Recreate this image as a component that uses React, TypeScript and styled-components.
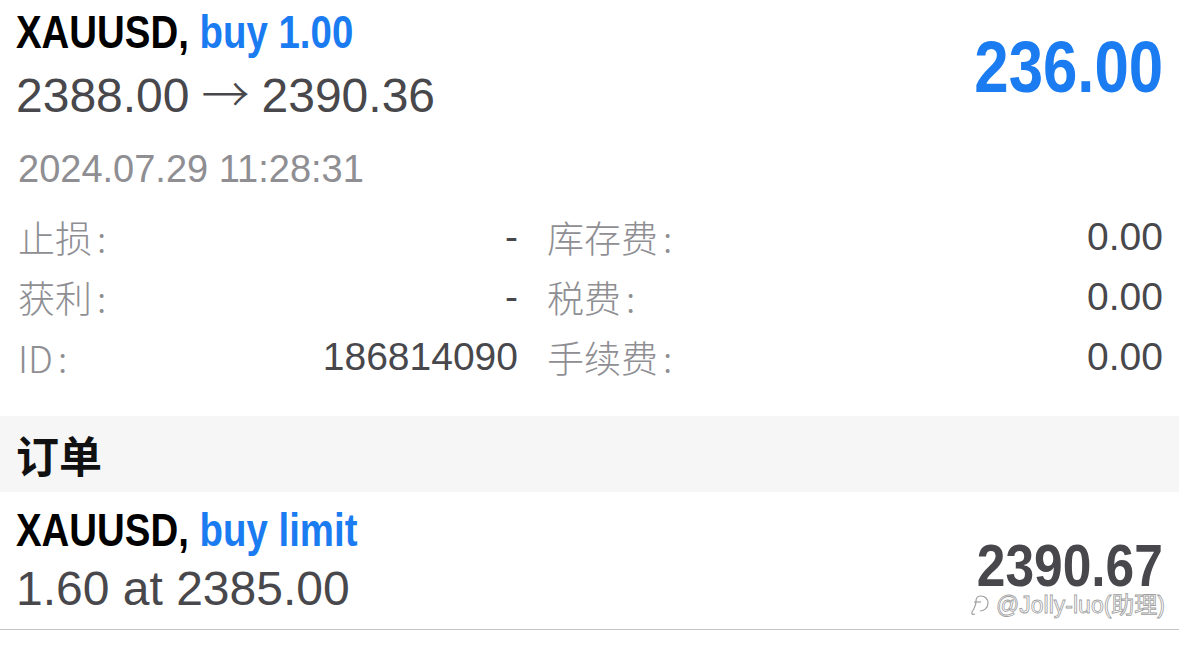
import styled, { createGlobalStyle } from "styled-components";
import { Fragment } from "react";

const Global = createGlobalStyle`
    html, body {
        margin: 0;
        padding: 0;
        background: #ffffff;
    }
    body {
        font-family: "Liberation Sans", Arial, "Noto Sans CJK SC", sans-serif;
        -webkit-font-smoothing: antialiased;
    }
`

const Page = styled.div`
    width: 1179px;
    height: 647px;
    overflow: hidden;
    background: #fff;
`

const Position = styled.div`
    display: grid;
    grid-template-columns: 1fr auto;
    padding: 5px 16px 0 16px;
    position: relative;
`

const TitleBlock = styled.div`
    display: flex;
    flex-direction: column;
`

// condensed bold look: no narrow font installed, so squeeze Liberation Sans
const Title = styled.div`
    font-weight: bold;
    font-size: 46px;
    line-height: 54px;
    color: #000;
    white-space: nowrap;
    transform: scaleX(0.835);
    transform-origin: left center;
`

const Side = styled.span`
    color: #1b7cf1;
`

const Prices = styled.div`
    font-size: 48px;
    line-height: 64px;
    color: #48484c;
    white-space: nowrap;
`

const Arrow = styled.span`
    font-family: "Noto Sans CJK SC", sans-serif;
    font-weight: 300;
    margin: 0 12px;
`

const Profit = styled.div<{ $color: string; $size: number; $top: number }>`
    font-weight: bold;
    font-size: ${p => p.$size}px;
    line-height: ${p => Math.round(p.$size * 0.77)}px;
    color: ${p => p.$color};
    margin-top: ${p => p.$top}px;
    white-space: nowrap;
    transform: scaleX(0.858);
    transform-origin: right center;
`

const Date = styled.div`
    font-size: 38px;
    line-height: 40px;
    color: #8e8e93;
    padding: 21px 18px 18px;
`

const Details = styled.div`
    display: grid;
    grid-template-columns: 500px 1fr;
    column-gap: 29px;
    padding: 0 16px 0 18px;
`

const Cell = styled.div`
    display: flex;
    justify-content: space-between;
    align-items: center;
    height: 60px;
    font-size: 39px;
`

const Label = styled.span`
    color: #8e8e93;
    font-family: "Noto Sans CJK SC", "Liberation Sans", sans-serif;
    font-weight: 300;
    font-size: 37px;
`

const Colon = styled.span`
    margin-left: 5px;
`

const Value = styled.span`
    color: #48484c;
`

const SectionHeader = styled.div`
    margin-top: 29px;
    background: #f6f6f6;
    height: 76px;
    display: flex;
    align-items: center;
    padding: 0 16px;
    font-family: "Noto Sans CJK SC", sans-serif;
    font-weight: bold;
    font-size: 43px;
    color: #111;
`

const Order = styled(Position)`
    padding-top: 11px;
    padding-bottom: 8px;
    border-bottom: 1px solid #c6c6c8;
`

const Watermark = styled.div`
    position: absolute;
    right: 14px;
    top: 100px;
    display: flex;
    align-items: center;
    gap: 6px;
    font-size: 23px;
    line-height: 26px;
    color: #fff;
    -webkit-text-stroke: 0.8px #a0a0a0;
    white-space: nowrap;
`

const details: [string, string, string, string][] = [
    ["止损", "-", "库存费", "0.00"],
    ["获利", "-", "税费", "0.00"],
    ["ID", "186814090", "手续费", "0.00"],
]

const MarkIcon = () => (
    <svg width="22" height="24" viewBox="0 0 22 24" fill="none" stroke="#a0a0a0" strokeWidth="1.2">
        <path d="M7 21 C5 22 3 21 4 19 C6 16 8 12 8 8 C8 5 10 3 13 3 C17 3 20 6 20 10 C20 15 16 18 12 18" />
        <path d="M6 9 L13 9" />
    </svg>
)

export default function App() {
    return (
        <Page>
            <Global />
            <Position>
                <TitleBlock>
                    <Title>XAUUSD, <Side>buy 1.00</Side></Title>
                    <Prices>2388.00<Arrow>→</Arrow>2390.36</Prices>
                </TitleBlock>
                <Profit $color="#1b7cf1" $size={72} $top={35}>236.00</Profit>
            </Position>
            <Date>2024.07.29 11:28:31</Date>
            <Details>
                {details.map(([l1, v1, l2, v2]) => (
                    <Fragment key={l1}>
                        <Cell>
                            <Label>{l1}<Colon>:</Colon></Label>
                            <Value>{v1}</Value>
                        </Cell>
                        <Cell>
                            <Label>{l2}<Colon>:</Colon></Label>
                            <Value>{v2}</Value>
                        </Cell>
                    </Fragment>
                ))}
            </Details>
            <SectionHeader>订单</SectionHeader>
            <Order>
                <TitleBlock>
                    <Title>XAUUSD, <Side>buy limit</Side></Title>
                    <Prices>1.60 at 2385.00</Prices>
                </TitleBlock>
                <Profit $color="#48484c" $size={60} $top={40}>2390.67</Profit>
                <Watermark>
                    <MarkIcon />
                    <span>@Jolly-luo(助理)</span>
                </Watermark>
            </Order>
        </Page>
    )
}
